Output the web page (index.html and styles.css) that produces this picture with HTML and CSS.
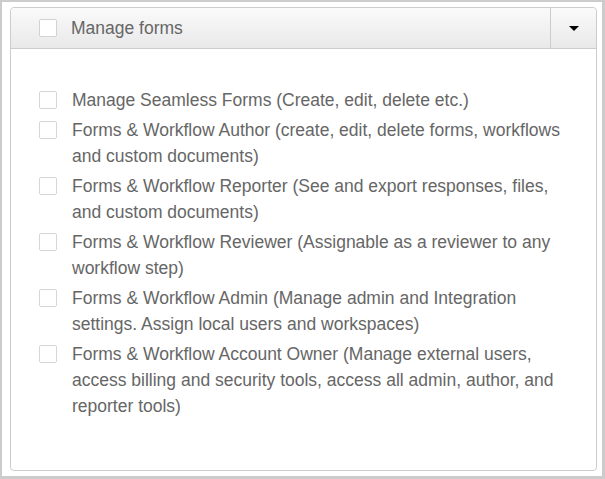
FILE: index.html
```html
<!DOCTYPE html>
<html lang="en">
<head>
    <meta charset="UTF-8">
    <title>Manage forms</title>
    <link rel="stylesheet" href="styles.css">
</head>
<body>
    <div class="frame">
        <div class="panel">
            <div class="panel-header">
                <label class="header-label">
                    <span class="box"></span>
                    <span>Manage forms</span>
                </label>
                <button class="toggle"><span class="caret"></span></button>
            </div>
            <ul class="options">
                <li><span class="box"></span><span>Manage Seamless Forms (Create, edit, delete etc.)</span></li>
                <li><span class="box"></span><span>Forms &amp; Workflow Author (create, edit, delete forms, workflows and custom documents)</span></li>
                <li><span class="box"></span><span>Forms &amp; Workflow Reporter (See and export responses, files, and custom documents)</span></li>
                <li><span class="box"></span><span>Forms &amp; Workflow Reviewer (Assignable as a reviewer to any workflow step)</span></li>
                <li><span class="box"></span><span>Forms &amp; Workflow Admin (Manage admin and Integration settings. Assign local users and workspaces)</span></li>
                <li><span class="box"></span><span>Forms &amp; Workflow Account Owner (Manage external users, access billing and security tools, access all admin, author, and reporter tools)</span></li>
            </ul>
        </div>
    </div>
</body>
</html>
```

FILE: styles.css
```css
* {
    box-sizing: border-box;
    margin: 0;
    padding: 0;
}

html, body {
    width: 605px;
    height: 479px;
}

body {
    font-family: Arial, "Liberation Sans", sans-serif;
    color: #666;
    background-color: #fff;
}

.frame {
    width: 605px;
    height: 479px;
    border: 2px solid #ccc;
    border-right-width: 3px;
    border-bottom-width: 3px;
    padding: 5px 5px 5px 8px;
    background-color: #fff;
}

/* Panel */
.panel {
    height: 100%;
    border: 1px solid #ccc;
    border-radius: 4px;
    display: flex;
    flex-direction: column;
}

.panel-header {
    height: 41px;
    display: flex;
    align-items: stretch;
    border-bottom: 1px solid #ccc;
    border-radius: 4px 4px 0 0;
    background: linear-gradient(to bottom, #fafafa, #e9e9e9);
}

.header-label {
    flex: 1;
    display: flex;
    align-items: center;
    gap: 14px;
    padding-left: 28px;
    font-size: 17.5px;
    color: #666;
}

.toggle {
    width: 46px;
    border: none;
    border-left: 1px solid #ccc;
    background: transparent;
    display: flex;
    align-items: center;
    justify-content: center;
    border-radius: 0 4px 0 0;
}

.caret {
    width: 0;
    height: 0;
    border-left: 5px solid transparent;
    border-right: 5px solid transparent;
    border-top: 5px solid #000;
}

/* Checkboxes */
.box {
    flex: none;
    width: 18px;
    height: 18px;
    border: 1px solid #d6d6d6;
    border-radius: 2px;
    background-color: #fff;
}

.panel-header .box {
    border-color: #d2d2d2;
}

/* Options list */
.options {
    list-style: none;
    padding: 38px 28px 0 28px;
    display: flex;
    flex-direction: column;
    gap: 4px;
}

.options li {
    display: flex;
    gap: 15px;
    font-size: 17.5px;
    line-height: 26px;
}

.options li .box {
    margin-top: 4px;
}
```
